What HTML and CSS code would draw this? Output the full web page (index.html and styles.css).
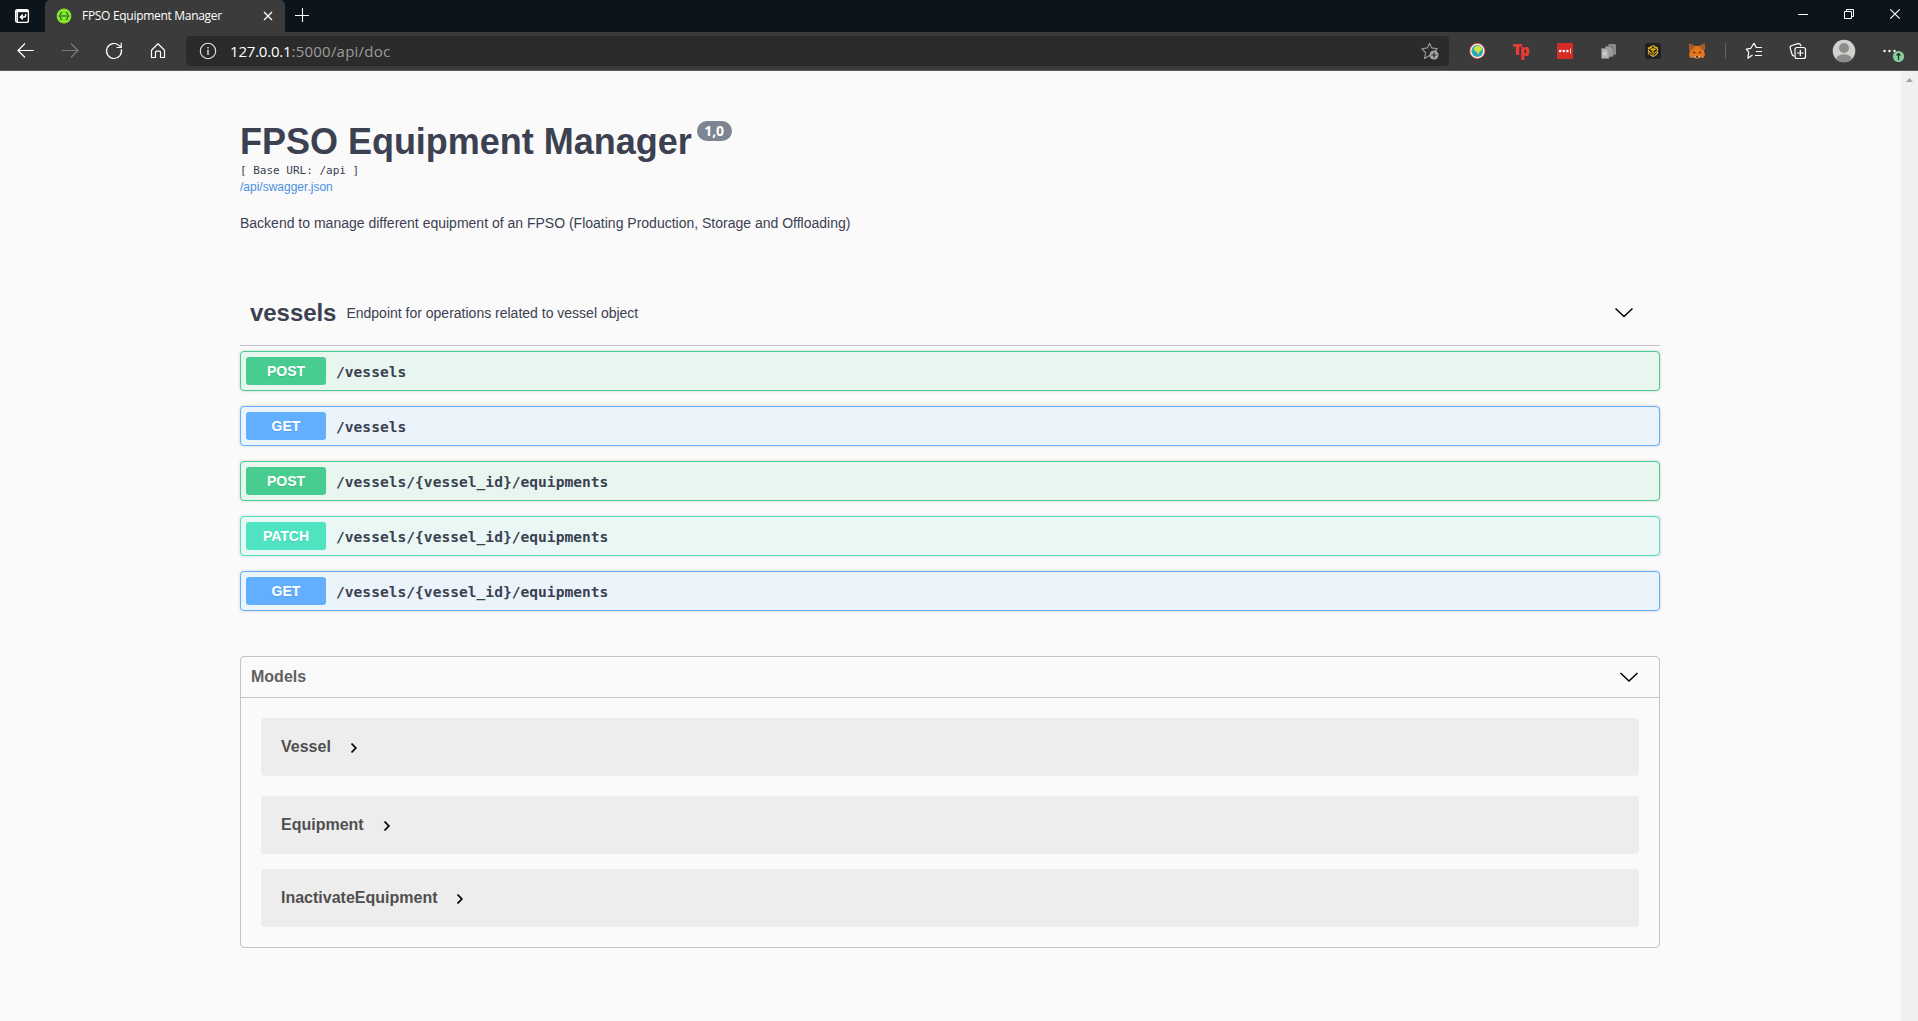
FILE: index.html
```html
<!DOCTYPE html>
<html lang="en">
<head>
<meta charset="utf-8">
<title>FPSO Equipment Manager</title>
<link rel="stylesheet" href="styles.css">
</head>
<body>
<div class="tabbar">
  <div class="tab-actions">
    <svg width="16" height="16" viewBox="0 0 16 16" fill="none" stroke="#fff"><rect x="1.6" y="1.6" width="12.8" height="12.8" rx="2" stroke-width="1.3"/><path d="M1.5 3h13" stroke-width="2.4"/><path d="M3.2 4v10" stroke-width="1.6"/><path d="M11.6 6v1.5q0 1.5-1.5 1.5H6.6M8.8 6.6 6.4 9l2.4 2.4" stroke-width="1.5"/></svg>
  </div>
  <div class="tab">
    <svg class="favicon" width="16" height="16" viewBox="0 0 16 16"><circle cx="8" cy="8" r="7.4" fill="#85ea2d"/><path d="M6.2 4.2Q4.8 4.2 4.8 5.5T3.4 8q1.4.7 1.4 2.2t1.4 1.6M9.8 4.2q1.4 0 1.4 1.3T12.6 8q-1.4.7-1.4 2.2t-1.4 1.6" fill="none" stroke="#255a2b" stroke-width="1.1"/><path d="M5.5 8h5" stroke="#255a2b" stroke-width="1.6" stroke-dasharray="1.4 .4"/></svg>
    <span class="tab-title">FPSO Equipment Manager</span>
    <svg class="tab-close" width="10" height="10" viewBox="0 0 10 10" stroke="#fff" stroke-width="1.3"><path d="m1 1 8 8M9 1 1 9"/></svg>
  </div>
  <svg class="new-tab" width="14" height="14" viewBox="0 0 14 14" stroke="#fff" stroke-width="1.1"><path d="M7.5 0v14M0 7.5h14"/></svg>
  <div class="window-controls">
    <svg width="46" height="28" viewBox="0 0 46 28" stroke="#fff"><path d="M18 14.5h10"/></svg>
    <svg width="46" height="28" viewBox="0 0 46 28" stroke="#fff" fill="none"><path d="M18.5 11.5h7v7h-7zM20.500 11V9.500h7v7H26"/></svg>
    <svg width="46" height="28" viewBox="0 0 46 28" stroke="#fff" stroke-width="1.2"><path d="m18.300 9.300 9.400 9.400M27.700 9.300l-9.400 9.400"/></svg>
  </div>
</div>

<div class="toolbar">
  <div class="nav">
    <svg class="slot" viewBox="0 0 44 38" fill="none" stroke="#fff" stroke-width="1.2"><path d="M29.800 18.500H14M21 11.500l-7 7 7 7"/></svg>
    <svg class="slot" viewBox="0 0 44 38" fill="none" stroke="#7a7a7a" stroke-width="1.2"><path d="M14 18.500h15.800M23 11.500l7 7-7 7"/></svg>
    <svg class="slot" viewBox="0 0 44 38" fill="none" stroke="#fff" stroke-width="1.2"><path d="M29.300 17.200a7.500 7.500 0 1 1-2.300-3.800l1.800 1.800M29.200 10.800v4.700h-4.700"/></svg>
    <svg class="slot" viewBox="0 0 44 38" fill="none" stroke="#fff" stroke-width="1.2"><path d="M15.500 18.200 22 11.800l6.500 6.400v7.300h-4v-5.300q0-1-1-1h-3q-1 0-1 1v5.300h-4z" stroke-linejoin="round"/></svg>
  </div>
  <div class="address">
    <svg width="18" height="18" viewBox="0 0 18 18" fill="none" stroke="#e6e6e6" stroke-width="1.1"><circle cx="9" cy="9" r="7.700"/><path d="M9 7.700v5.200M9 5v1.500" stroke-width="1.400"/></svg>
    <span class="url"><span class="host">127.0.0.1</span><span class="path">:5000/api/doc</span></span>
    <svg class="add-favorite" width="18" height="18" viewBox="0 0 18 18" fill="none" stroke="#9c9c9c" stroke-width="1.1"><path d="M9 13.200 3.600 16.500l1-6L.9 6.800l5.400-.9L8.500 1.200l2.300 4.700 5.500.9-2.300 2.200" stroke-linejoin="round"/><circle cx="13" cy="13" r="4.500" fill="#a6a6a6" stroke="none"/><path d="M13 10.400v5.200M10.400 13h5.200" stroke="#2b2b2b" stroke-width="1.200"/></svg>
  </div>
  <div class="extensions">
    <svg class="slot" viewBox="0 0 44 38"><circle cx="22.300" cy="19" r="7.900" fill="#e86b4b"/><circle cx="22.300" cy="19" r="7" fill="#fff"/><circle cx="22.300" cy="19" r="5.900" fill="#2aa8bd"/><path d="m18.500 16 3.500-2.200 4 1 1 3-2.500 2-1 3.300-1.700-3-2.300-1.500z" fill="#cfe43c"/></svg>
    <div class="slot tp"><span class="tp-t">T</span><span class="tp-p">p</span></div>
    <svg class="slot" viewBox="0 0 44 38"><rect x="14" y="11" width="16" height="16" rx="1" fill="#d32d27"/><g fill="#fff"><circle cx="17.200" cy="19" r="1.300"/><circle cx="20.800" cy="19" r="1.300"/><circle cx="24.400" cy="19" r="1.300"/><path d="M27 16.500h.7v5H27z"/></g></svg>
    <svg class="slot" viewBox="0 0 44 38"><rect x="21" y="12" width="8" height="11" rx="1.500" fill="#8a8a8a"/><rect x="18" y="14" width="8" height="11" rx="1" fill="#777"/><path d="M18.500 14.500h4.500l3 2.500v7.500h-7.500z" fill="#a0a0a0" stroke="#777" stroke-width=".6"/><path d="M14.500 16.500h4.500l3 2.500v7.500h-7.500z" fill="#b4b4b4" stroke="#858585" stroke-width=".6"/><path d="M16 20h3.500v3.500H16z" fill="#cfcfcf"/></svg>
    <svg class="slot" viewBox="0 0 44 38"><rect x="14" y="11" width="16" height="16" rx="3" fill="#1e2026"/><path d="m22 13.500 4.500 2.600v5.600L22 24.500l-4.500-2.800v-5.600zM17.500 16l4.500 2.600 4.500-2.600M22 18.600v5.600M19 15l4 2.500M25 15l-4 2.500M18 19.500l3 2M26 19.500l-3 2" fill="none" stroke="#e9b51a" stroke-width="1.200" stroke-dasharray="2.400 .5"/></svg>
    <svg class="slot" viewBox="0 0 44 38"><path d="m14.400 11.500 5.600 2.500h4l5.600-2.500.4 4-1 3.500 1 4-1.500 3-4-.8-1.500 1.600h-2l-1.500-1.600-4 .8L14 23l1-4-1-3.500z" fill="#e6761b"/><path d="m14.400 11.500 5.600 2.500-2 3.500-3 .8-1-2.800zM29.600 11.500 24 14l2 3.500 3 .8 1-2.800z" fill="#a65c2a"/><path d="m18 19.500 2.500 1-.5 1-2-.7zM26 19.500l-2.500 1 .5 1 2-.7zM20.800 24.200h2.400v1.500h-2.400z" fill="#2b2b2b"/><path d="m19 23.500 1.500.7v2l-1.500-.8zM25 23.500l-1.500.7v2l1.500-.8z" fill="#c9bdb0"/></svg>
  </div>
  <div class="divider"></div>
  <div class="browser-tools">
    <svg class="slot" viewBox="0 0 44 38" fill="none" stroke="#fff" stroke-width="1.200"><path d="m20.500 23-4.600 3.200.8-6-2.400-3 4.500-.9 3.200-5 2.600 4.700" stroke-linejoin="round"/><path d="M24 15.500h6M24 19.500h6M23 23.500h7"/></svg>
    <svg class="slot" viewBox="0 0 44 38" fill="none" stroke="#fff" stroke-width="1.200"><path d="M18 24.200q-1.500-.4-2-2L14.200 16q-.4-2 1.400-2.500l6.400-1.800q2-.4 2.600 1.300l.4 1.300"/><rect x="19" y="15.500" width="10.500" height="11" rx="2"/><path d="M24.300 17.800v6.400M21.100 21h6.400"/></svg>
    <svg class="slot avatar" viewBox="0 0 48 38"><defs><clipPath id="face"><circle cx="24" cy="19" r="11.300"/></clipPath></defs><circle cx="24" cy="19" r="11.300" fill="#d2d0ce"/><g clip-path="url(#face)" fill="#8e8c8a"><circle cx="24" cy="16" r="5"/><ellipse cx="24" cy="27.500" rx="8" ry="5.200"/></g></svg>
    <svg class="slot more" viewBox="0 0 50 38"><g fill="#fff"><circle cx="16.500" cy="19" r="1.200"/><circle cx="21.500" cy="19" r="1.200"/><circle cx="26.500" cy="19" r="1.200"/></g><circle cx="30.500" cy="24.500" r="5.600" fill="#83cf9b"/><path d="M30.500 28v-6.500M28.500 23.500l2-2 2 2" fill="none" stroke="#252525" stroke-width="1.100"/></svg>
  </div>
</div>

<div class="viewport">
  <main class="swagger">
    <header class="info">
      <div class="title-row"><h1>FPSO Equipment Manager</h1><span class="version">1,0</span></div>
      <div class="base-url">[ Base URL: /api ]</div>
      <a class="spec-link">/api/swagger.json</a>
      <p class="description">Backend to manage different equipment of an FPSO (Floating Production, Storage and Offloading)</p>
    </header>

    <section>
      <div class="tag-header">
        <h2>vessels</h2>
        <span class="tag-description">Endpoint for operations related to vessel object</span>
        <svg class="chevron" width="20" height="12" viewBox="0 0 20 12"><path d="m1.500 1.500 8.500 8 8.500-8" fill="none" stroke="#000" stroke-width="1.500"/></svg>
      </div>
      <div class="operations">
        <div class="operation post"><span class="method">POST</span><span class="route">/vessels</span></div>
        <div class="operation get"><span class="method">GET</span><span class="route">/vessels</span></div>
        <div class="operation post"><span class="method">POST</span><span class="route">/vessels/{vessel_id}/equipments</span></div>
        <div class="operation patch"><span class="method">PATCH</span><span class="route">/vessels/{vessel_id}/equipments</span></div>
        <div class="operation get"><span class="method">GET</span><span class="route">/vessels/{vessel_id}/equipments</span></div>
      </div>
    </section>

    <section class="models">
      <div class="models-header">
        <h4>Models</h4>
        <svg class="chevron" width="20" height="12" viewBox="0 0 20 12"><path d="m1.500 2 8.500 8 8.500-8" fill="none" stroke="#000" stroke-width="1.500"/></svg>
      </div>
      <div class="model">Vessel<svg class="expand" width="8" height="12" viewBox="0 0 8 12"><path d="m1.500 1.500 4.300 4.500-4.300 4.500" fill="none" stroke="#000" stroke-width="1.800"/></svg></div>
      <div class="model second">Equipment<svg class="expand" width="8" height="12" viewBox="0 0 8 12"><path d="m1.500 1.500 4.300 4.500-4.300 4.500" fill="none" stroke="#000" stroke-width="1.800"/></svg></div>
      <div class="model">InactivateEquipment<svg class="expand" width="8" height="12" viewBox="0 0 8 12"><path d="m1.500 1.500 4.300 4.500-4.300 4.500" fill="none" stroke="#000" stroke-width="1.800"/></svg></div>
    </section>
  </main>
  <div class="scrollbar"><svg width="7" height="4" viewBox="0 0 7 4"><path d="M0 4 3.500 0 7 4z" fill="#a3a3a3"/></svg></div>
</div>
</body>
</html>
```
FILE: styles.css
```css
* { box-sizing: border-box; }

body {
  margin: 0;
  height: 1021px;
  overflow: hidden;
  display: flex;
  flex-direction: column;
  background: #fafafa;
  color: #3b4151;
  font-family: "Liberation Sans", Arial, sans-serif;
}

svg { display: block; flex: none; }
h1, h2, h4, p { margin: 0; }

/* Browser chrome */
.tabbar {
  height: 32px;
  flex: none;
  display: flex;
  background: #0d151c;
}
.tab-actions { width: 45px; padding: 8px 0 0 14px; }
.tab {
  width: 240px;
  height: 32px;
  display: flex;
  align-items: center;
  padding: 0 11px;
  background: #3b3b3b;
  border-radius: 5px 5px 0 0;
}
.tab-title {
  margin-left: 10px;
  flex: 1;
  font: 12px/16px "Open Sans", "Noto Sans", sans-serif;
  letter-spacing: -0.3px;
  color: #fff;
  white-space: nowrap;
}
.tab-close { margin-right: 1px; }
.new-tab { margin: 8px 0 0 10px; }
.window-controls { display: flex; margin-left: auto; }

.toolbar {
  height: 39px;
  flex: none;
  display: flex;
  background: #3b3b3b;
  border-bottom: 1px solid #5c5a5c;
}
.slot { width: 44px; height: 38px; flex: none; }
.nav { display: flex; margin: 0 6px 0 4px; }
.address {
  flex: 1;
  height: 30px;
  margin-top: 4px;
  padding: 0 10px 0 13px;
  display: flex;
  align-items: center;
  border-radius: 4px;
  background: #2b2b2b;
}
.url {
  margin-left: 13px;
  flex: 1;
  font: 15px/20px "Open Sans", "Noto Sans", sans-serif;
}
.host { color: #fff; letter-spacing: -0.2px; }
.path { color: #9b9b9b; letter-spacing: 0.23px; }
.extensions { display: flex; margin-left: 6px; }
.tp {
  display: flex;
  justify-content: center;
  color: #ee3a35;
  font: 800 15px/20px "Open Sans", sans-serif;
  padding-top: 7px;
}
.tp-t { font-size: 16px; }
.tp-p { padding-top: 1px; margin-left: -2px; }
.divider { width: 1px; height: 16px; margin: 11px 6px; background: #646464; }
.browser-tools { display: flex; }
.avatar { width: 48px; }
.more { width: 50px; }

/* Page */
.viewport { flex: 1; display: flex; min-height: 0; }
.swagger { flex: 1; padding: 50px 241px 0 240px; }
.scrollbar {
  width: 17px;
  background: #f0f0f0;
  display: flex;
  justify-content: center;
  padding-top: 7px;
}

.info { height: 159px; }
.title-row { display: flex; align-items: flex-start; height: 43px; }
h1 { font-size: 36px; line-height: 41px; letter-spacing: -0.02px; }
.version {
  margin-left: 5px;
  height: 20px;
  padding: 0 7.5px;
  border-radius: 10px;
  background: #7d8492;
  color: #fff;
  font: bold 14px/20px "Open Sans", sans-serif;
}
.base-url { font: 11px/14px "DejaVu Sans Mono", monospace; }
.spec-link { display: block; margin-top: 1px; font-size: 12px; line-height: 16px; color: #4990e2; }
.description { margin-top: 19px; font-size: 14px; line-height: 18px; }

.tag-header {
  height: 66px;
  margin-bottom: 5px;
  display: flex;
  align-items: center;
  padding: 0 26px 0 10px;
  border-bottom: 1px solid #c1c3c7;
}
h2 { font-size: 24px; line-height: 28px; letter-spacing: -0.05px; }
.tag-description { margin-left: 10px; flex: 1; font-size: 14px; }

.operations { display: flex; flex-direction: column; gap: 15px; }
.operation {
  height: 40px;
  display: flex;
  align-items: center;
  padding: 0 5px;
  border: 1px solid;
  border-radius: 4px;
  box-shadow: 0 0 3px rgba(0, 0, 0, .19);
}
.method {
  width: 80px;
  height: 28px;
  border-radius: 3px;
  color: #fff;
  font-size: 14px;
  font-weight: bold;
  line-height: 28px;
  text-align: center;
  text-shadow: 0 1px 0 rgba(0, 0, 0, .1);
}
.route { margin: 1px 0 0 10px; font: bold 14.6px/20px "DejaVu Sans Mono", monospace; }
.post { border-color: #49cc90; background: #e8f6f0; }
.post .method { background: #49cc90; }
.get { border-color: #61affe; background: #ebf3fb; }
.get .method { background: #61affe; }
.patch { border-color: #50e3c2; background: #e9f8f5; }
.patch .method { background: #50e3c2; }

.models {
  height: 292px;
  margin-top: 45px;
  border: 1px solid #c1c3c7;
  border-radius: 4px;
}
.models-header {
  height: 41px;
  margin-bottom: 20px;
  display: flex;
  align-items: center;
  justify-content: space-between;
  padding: 0 20px 0 10px;
  border-bottom: 1px solid #c1c3c7;
}
h4 { font-size: 16px; line-height: 20px; color: #606060; }
.model {
  height: 58px;
  margin: 0 20px 20px;
  padding: 0 20px;
  display: flex;
  align-items: center;
  border-radius: 4px;
  background: #ededed;
  color: #505050;
  font-size: 16px;
  font-weight: bold;
}
.second { margin-bottom: 15px; }
.expand { margin: 2px 0 0 19px; }
```
